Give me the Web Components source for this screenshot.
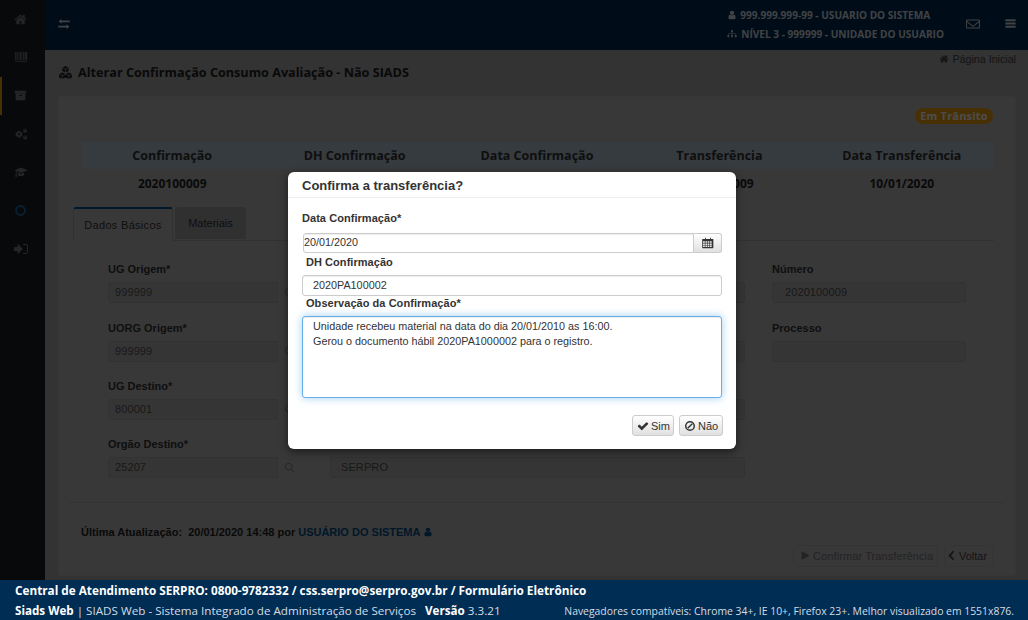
<!DOCTYPE html>
<html lang="pt-BR">
<head>
<meta charset="utf-8">
<title>SIADS</title>
<style>
  html, body { margin: 0; height: 100%; overflow: hidden; background: #b0b0b0; }
</style>
</head>
<body>

<siads-app>
  <siads-sidebar slot="sidebar"></siads-sidebar>
  <siads-topbar slot="topbar"></siads-topbar>
  <siads-page slot="page"></siads-page>
  <siads-footer slot="footer"></siads-footer>
  <siads-modal slot="modal"></siads-modal>
</siads-app>

<script>
// Icons, all on a 1792 grid
const ICONS = {
  home: '<path d="M1472 992v480q0 26-19 45t-45 19h-384v-384h-256v384h-384q-26 0-45-19t-19-45v-480q0-1 .5-3t.5-3l575-474 575 474q1 2 1 6zm223-69l-62 74q-8 9-21 11h-3q-13 0-21-7l-692-577-692 577q-12 8-24 7-13-2-21-11l-62-74q-8-10-7-23.500t11-21.500l719-599q32-26 76-26t76 26l244 204v-195q0-14 9-23t23-9h192q14 0 23 9t9 23v408l219 182q10 8 11 21.500t-7 23.500z"/>',
  user: '<path d="M1536 1399q0 109-62.500 187t-150.500 78h-854q-88 0-150.500-78t-62.500-187q0-85 8.500-160.500t31.500-152 58.500-131 94-89 134.500-34.500q131 128 313 128t313-128q76 0 134.500 34.500t94 89 58.500 131 31.500 152 8.500 160.500zm-256-887q0 159-112.500 271.500t-271.500 112.500-271.500-112.500-112.500-271.500 112.500-271.500 271.500-112.500 271.500 112.500 112.500 271.500z"/>',
  exchange: '<path d="M160 1130h1060v-190l372 300-372 300v-190H160zM1632 662H572v190L200 552l372-300v190h1060z"/>',
  barcode: '<path d="M120 260h110v1060H120zM300 260h60v1060h-60zM430 260h110v1060H430zM620 260h60v1060h-60zM760 260h130v1060H760zM970 260h60v1060h-60zM1110 260h130v1060h-130zM1320 260h60v1060h-60zM1450 260h220v1060h-220zM120 1420h1550v90H120z"/>',
  archive: '<path d="M128 256h1536v384H128zM224 704h1344v832H224z M704 832v128h384V832z" fill-rule="evenodd"/>',
  cogs: '<path fill-rule="evenodd" d="M660 480l90 20 40 150 110 60 140-50 70 120-110 100v120l110 100-70 120-140-50-110 60-40 150H530l-40-150-110-60-140 50-70-120 110-100V860l-110-100 70-120 140 50 110-60 40-150zM640 780a140 140 0 1 0 .1 0zM1380 180l80 30 20 90 60 40 90-20 40 80-70 60v70l70 60-40 80-90-20-60 40-20 90h-100l-20-90-60-40-90 20-40-80 70-60v-70l-70-60 40-80 90 20 60-40 20-90zM1360 370a75 75 0 1 0 .1 0zM1380 1040l80 30 20 90 60 40 90-20 40 80-70 60v70l70 60-40 80-90-20-60 40-20 90h-100l-20-90-60-40-90 20-40-80 70-60v-70l-70-60 40-80 90 20 60-40 20-90zM1360 1230a75 75 0 1 0 .1 0z"/>',
  graduation: '<path d="M900 330L1780 660 900 1000 380 800c-50 70-70 170-70 280 40 30 50 90 20 130l60 300H150l60-310c-30-50-20-100 20-130 0-130 30-240 80-320L20 660zM500 960l400 150 400-150v280c0 100-180 180-400 180s-400-80-400-180z"/>',
  circle: '<circle cx="896" cy="896" r="620" fill="none" stroke="currentColor" stroke-width="250"/>',
  signin: '<path d="M1120 896q0 26-19 45l-544 544q-19 19-45 19t-45-19-19-45v-288H64q-26 0-45-19t-19-45V704q0-26 19-45t45-19h384V352q0-26 19-45t45-19 45 19l544 544q19 19 19 45zM1792 544v704q0 119-84.500 203.500T1504 1536h-320q-13 0-22.500-9.500T1152 1504q0-4-1-20t-.5-26.500 3-23.500 10-19.500 20.500-6.500h320q66 0 113-47t47-113V544q0-66-47-113t-113-47h-312q-8 0-14-6t-8-16q0-4-1-20t-.5-26.500 3-23.500 10-19.500 20.500-6.500h320q119 0 203.500 84.500T1792 544z"/>',
  sitemap: '<path d="M736 192h320v384H952v208h560q40 0 68 28t28 68v208h120v384h-320v-384h120V912H952v176h104v384H736v-384h104V912H284v176h120v384H84v-384h120V880q0-40 28-68t68-28h540V576H736z"/>',
  envelope: '<path fill-rule="evenodd" d="M160 320h1472q66 0 113 47t47 113v832q0 66-47 113t-113 47H160q-66 0-113-47T0 1312V480q0-66 47-113t113-47zM128 480v30l768 610 768-610v-30q0-32-32-32H160q-32 0-32 32zm0 192v640q0 32 32 32h1472q32 0 32-32V672L936 1260q-40 28-80 0z"/>',
  bars: '<path d="M192 320h1408v256H192zM192 768h1408v256H192zM192 1216h1408v256H192z"/>',
  cubes: '<path d="M896 128l384 190v400l-384 190-384-190V318zM512 890l384 190v400l-384 190-384-190v-400zM1280 890l384 190v400l-384 190-384-190v-400z"/><path fill="none" stroke="#c4c4c4" stroke-width="70" d="M512 318l384 190 384-190M896 508v400M128 1080l384 190 384-190M512 1270v400M896 1080l384 190 384-190M1280 1270v400"/>',
  calendar: '<path fill-rule="evenodd" d="M448 128h128v160h640V128h128v160h256q40 0 68 28t28 68v1184q0 40-28 68t-68 28H128q-40 0-68-28t-28-68V384q0-40 28-68t68-28h320zM160 640v224h260V640zm356 0v224h240V640zm336 0v224h240V640zm336 0v224h260V640zM160 960v224h260V960zm356 0v224h240V960zm336 0v224h240V960zm336 0v224h260V960zM160 1280v224h260v-224zm356 0v224h240v-224zm336 0v224h240v-224zm336 0v224h260v-224z"/>',
  check: '<path d="M1671 566q0 40-28 68l-724 724-136 136q-28 28-68 28t-68-28l-136-136-362-362q-28-28-28-68t28-68l136-136q28-28 68-28t68 28l294 295 656-657q28-28 68-28t68 28l136 136q28 28 28 68z"/>',
  ban: '<circle cx="896" cy="896" r="640" fill="none" stroke="currentColor" stroke-width="220"/><path d="M470 1170L1170 470l150 150-700 700z"/>',
  play: '<path d="M256 192l1344 704-1344 704z"/>',
  chevron: '<path d="M1171 301l-531 595 531 595-199 199-750-794 750-794z"/>',
  search: '<path fill-rule="evenodd" d="M768 128a640 640 0 0 1 512 1024l400 400-128 128-400-400A640 640 0 1 1 768 128zm0 192a448 448 0 1 0 .1 0z"/>'
};

class SiadsIcon extends HTMLElement {
  connectedCallback() {
    const size = this.getAttribute( 'size' ) || '12';
    this.attachShadow( {mode: 'open'} );
    this.shadowRoot.innerHTML = /* template */ `
      <style>
        :host { display: inline-flex; flex: none; line-height: 0; }
        svg { display: block; fill: currentColor; height: ${size}px; width: ${size}px; }
      </style>
      <svg viewBox="0 0 1792 1792" aria-hidden="true">${ICONS[this.getAttribute( 'name' )] || ''}</svg>
    `;
  }
}
customElements.define( 'siads-icon', SiadsIcon );

class SiadsApp extends HTMLElement {
  constructor() {
    super();
    this.attachShadow( {mode: 'open'} );
    this.shadowRoot.innerHTML = /* template */ `
      <style>
        :host {
          display: grid;
          grid-template-columns: 45px minmax( 0, 1fr );
          grid-template-rows: 50px 530px 40px;
          height: 620px;
          overflow: hidden;
          position: relative;
          width: 1028px;
        }
        ::slotted([slot=sidebar]) { grid-column: 1; grid-row: 1 / 3; }
        ::slotted([slot=topbar]) { grid-column: 2; grid-row: 1; }
        ::slotted([slot=page]) { grid-column: 2; grid-row: 2; }
        ::slotted([slot=footer]) { grid-column: 1 / 3; grid-row: 3; position: relative; z-index: 3; }
        .scrim {
          background: rgba( 0, 0, 0, .7 );
          inset: 0;
          position: absolute;
          z-index: 2;
        }
      </style>
      <slot name="sidebar"></slot>
      <slot name="topbar"></slot>
      <slot name="page"></slot>
      <slot name="footer"></slot>
      <div class="scrim"></div>
      <slot name="modal"></slot>
    `;
  }
}
customElements.define( 'siads-app', SiadsApp );

class SiadsSidebar extends HTMLElement {
  constructor() {
    super();
    this.attachShadow( {mode: 'open'} );
    this.shadowRoot.innerHTML = /* template */ `
      <style>
        :host { background: #1c1f25; color: #7c7e83; display: block; }
        a {
          align-items: center;
          box-sizing: border-box;
          display: flex;
          height: 38.330px;
          justify-content: center;
          padding-right: 4px;
        }
        a.active { border-left: 2px solid #f0a012; padding-right: 6px; }
        .blue { color: #1a6fae; }
      </style>
      <a><siads-icon name="home" size="13"></siads-icon></a>
      <a><siads-icon name="barcode" size="14"></siads-icon></a>
      <a class="active"><siads-icon name="archive" size="13"></siads-icon></a>
      <a><siads-icon name="cogs" size="14"></siads-icon></a>
      <a><siads-icon name="graduation" size="14"></siads-icon></a>
      <a class="blue"><siads-icon name="circle" size="13"></siads-icon></a>
      <a><siads-icon name="signin" size="14"></siads-icon></a>
    `;
  }
}
customElements.define( 'siads-sidebar', SiadsSidebar );

class SiadsTopbar extends HTMLElement {
  constructor() {
    super();
    this.attachShadow( {mode: 'open'} );
    this.shadowRoot.innerHTML = /* template */ `
      <style>
        :host {
          align-items: center;
          background: #002d54;
          color: #d8dce0;
          display: flex;
          font-family: 'Open Sans', sans-serif;
          padding: 0 11px 0 12px;
        }
        .toggle { margin: -3px auto 0 0; }
        .who {
          display: flex;
          flex-direction: column;
          font-size: 10.100px;
          font-weight: 700;
          gap: 4px;
          line-height: 15px;
          margin-top: -1px;
        }
        .who div { align-items: center; display: flex; gap: 3px; white-space: nowrap; }
        .who div + div { gap: 4px; }
        .mail { margin: -2px 0 0 22px; }
        .bars { margin: -3px 0 0 24px; }
      </style>
      <siads-icon class="toggle" name="exchange" size="14"></siads-icon>
      <div class="who">
        <div><siads-icon name="user" size="10"></siads-icon>999.999.999-99 - USUARIO DO SISTEMA</div>
        <div><siads-icon name="sitemap" size="10"></siads-icon>NÍVEL 3 - 999999 - UNIDADE DO USUARIO</div>
      </div>
      <siads-icon class="mail" name="envelope" size="14"></siads-icon>
      <siads-icon class="bars" name="bars" size="13"></siads-icon>
    `;
  }
}
customElements.define( 'siads-topbar', SiadsTopbar );

class SiadsField extends HTMLElement {
  constructor() {
    super();
    this.attachShadow( {mode: 'open'} );
    this.shadowRoot.innerHTML = /* template */ `
      <style>
        :host { display: block; min-width: 0; }
        label {
          color: #333;
          display: block;
          font-weight: bold;
          height: 20px;
          line-height: 14px;
        }
        .row { display: flex; }
        .box {
          background: #b2b2b2;
          border: 1px solid #a8a8a8;
          border-radius: 3px;
          box-sizing: border-box;
          color: #555;
          flex: 1;
          height: 21px;
          letter-spacing: .1px;
          line-height: 19px;
          min-width: 0;
          padding: 0 6px 0 var( --pad, 6px );
        }
        .addon {
          align-items: center;
          color: #8a8a8a;
          display: none;
          justify-content: center;
          width: 22px;
        }
        :host([search]) .addon { display: flex; }
        :host([search]) .box { border-radius: 3px 0 0 3px; }
      </style>
      <label></label>
      <div class="row">
        <div class="box"><slot></slot></div>
        <div class="addon"><siads-icon name="search" size="11"></siads-icon></div>
      </div>
    `;
    this.shadowRoot.querySelector( 'label' ).textContent = this.getAttribute( 'label' ) || '';
  }
}
customElements.define( 'siads-field', SiadsField );

class SiadsPage extends HTMLElement {
  constructor() {
    super();
    this.attachShadow( {mode: 'open'} );
    this.shadowRoot.innerHTML = /* template */ `
      <style>
        :host {
          background: #aaa;
          box-sizing: border-box;
          color: #333;
          display: flex;
          flex-direction: column;
          font-family: 'Liberation Sans', sans-serif;
          font-size: 11px;
          padding: 0 12px 4px 13px;
        }
        .head { display: flex; flex: none; height: 46px; justify-content: space-between; }
        h1 {
          align-items: center;
          color: #222;
          display: flex;
          font-family: 'Open Sans', sans-serif;
          font-size: 12.650px;
          font-weight: 700;
          gap: 5px;
          height: 44px;
          margin: 0;
        }
        .crumb { align-items: center; color: #444; display: flex; font-size: 10.700px; gap: 3px; height: 18px; }
        .card {
          background: #bdbdbd;
          border: 1px solid #b4b4b4;
          border-radius: 3px;
          box-sizing: border-box;
          flex: 1;
          padding: 11px 22px 0;
        }
        .status { display: flex; justify-content: flex-end; height: 34px; }
        .badge {
          background: #f0a012;
          border-radius: 8px;
          box-sizing: border-box;
          color: #fff;
          font-family: 'Open Sans', sans-serif;
          font-size: 11px;
          font-weight: 700;
          height: 16px;
          letter-spacing: .2px;
          line-height: 16px;
          text-align: center;
          width: 78px;
        }
        .summary {
          display: grid;
          font-family: 'Open Sans', sans-serif;
          font-size: 12px;
          font-weight: 700;
          grid-template-columns: repeat( 5, 1fr );
          text-align: center;
        }
        .summary b { background: #b6c6d3; display: block; font-size: 12.500px; font-weight: 700; line-height: 27px; }
        .summary span { color: #222; line-height: 30px; min-height: 30px; }
        .tabs {
          border-bottom: 1px solid #a4a4a4;
          display: flex;
          gap: 2px;
          height: 33px;
          margin: 8px -1px 0 -8px;
        }
        .tab {
          border-radius: 3px 3px 0 0;
          box-sizing: border-box;
          font-size: 11px;
          text-align: center;
        }
        .tab.on {
          background: #bdbdbd;
          border: 1px solid #a4a4a4;
          border-bottom: 0;
          border-top: 2px solid #00508c;
          height: 34px;
          letter-spacing: .3px;
          line-height: 33px;
          width: 100px;
        }
        .tab.off { background: #a2a2a2; height: 32px; line-height: 32px; width: 71px; }
        .form {
          display: grid;
          grid-template-columns: 192px 415px 191px;
          column-gap: 30px;
          padding: 21.400px 0 0 27px;
          row-gap: 17.330px;
        }
        .form siads-field:nth-child(3n) { margin-left: -3px; }
        hr { border: 0; border-top: 1px solid #aaa; margin: 23.600px -12px 0; }
        .updated {
          align-items: center;
          color: #222;
          display: flex;
          font-weight: bold;
          gap: 3px;
          height: 15px;
          margin-top: 22px;
        }
        .updated a { color: #004f88; }
        .actions { display: flex; gap: 6px; justify-content: flex-end; margin-top: 5px; }
        .actions button {
          align-items: center;
          background: #bbb;
          border: 1px solid #b0b0b0;
          border-radius: 3px;
          color: #444;
          display: flex;
          font: 11px 'Liberation Sans', sans-serif;
          height: 22px;
        }
        .actions .send { color: #777; gap: 2px; letter-spacing: .1px; padding: 0 0 0 6px; width: 145px; }
        .actions .back { gap: 1px; padding: 0 0 0 2px; width: 49px; }
      </style>
      <div class="head">
        <h1><siads-icon name="cubes" size="15"></siads-icon>Alterar Confirmação Consumo Avaliação - Não SIADS</h1>
        <div class="crumb"><siads-icon name="home" size="10"></siads-icon>Página Inicial</div>
      </div>
      <div class="card">
        <div class="status"><span class="badge">Em Trânsito</span></div>
        <div class="summary">
          <b>Confirmação</b><b>DH Confirmação</b><b>Data Confirmação</b><b>Transferência</b><b>Data Transferência</b>
          <span>2020100009</span><span></span><span></span><span>2020100009</span><span>10/01/2020</span>
        </div>
        <div class="tabs">
          <div class="tab on">Dados Básicos</div>
          <div class="tab off">Materiais</div>
        </div>
        <div class="form">
          <siads-field label="UG Origem*" search>999999</siads-field>
          <siads-field></siads-field>
          <siads-field label="Número" style="--pad:12px">2020100009</siads-field>
          <siads-field label="UORG Origem*" search>999999</siads-field>
          <siads-field></siads-field>
          <siads-field label="Processo"></siads-field>
          <siads-field label="UG Destino*" search>800001</siads-field>
          <siads-field></siads-field>
          <div></div>
          <siads-field label="Orgão Destino*" search>25207</siads-field>
          <siads-field style="--pad:10px">SERPRO</siads-field>
        </div>
        <hr>
        <div class="updated">Última Atualização:&nbsp; 20/01/2020 14:48 por <a>USUÁRIO DO SISTEMA</a><siads-icon name="user" size="10" style="color:#004f88"></siads-icon></div>
        <div class="actions">
          <button class="send" disabled><siads-icon name="play" size="11"></siads-icon>Confirmar Transferência</button>
          <button class="back"><siads-icon name="chevron" size="11"></siads-icon>Voltar</button>
        </div>
      </div>
    `;
  }
}
customElements.define( 'siads-page', SiadsPage );

class SiadsFooter extends HTMLElement {
  constructor() {
    super();
    this.attachShadow( {mode: 'open'} );
    this.shadowRoot.innerHTML = /* template */ `
      <style>
        :host {
          background: #002d54;
          box-sizing: border-box;
          color: #fff;
          display: block;
          font-family: 'Open Sans', sans-serif;
          font-size: 11.750px;
          padding: 0 14px 0 15px;
        }
        .top { font-weight: 700; height: 21px; line-height: 21px; }
        .bottom { align-items: center; display: flex; height: 19px; justify-content: space-between; }
        .bottom span { color: #d5dde4; font-size: 11.650px; }
        .bottom b { color: #fff; font-weight: 700; }
        .bottom small { color: #d5dde4; font-size: 10.400px; }
      </style>
      <div class="top">Central de Atendimento SERPRO: 0800-9782332 / css.serpro@serpro.gov.br / Formulário Eletrônico</div>
      <div class="bottom">
        <span><b>Siads Web</b> | SIADS Web - Sistema Integrado de Administração de Serviços &nbsp; <b>Versão</b> 3.3.21</span>
        <small>Navegadores compatíveis: Chrome 34+, IE 10+, Firefox 23+. Melhor visualizado em 1551x876.</small>
      </div>
    `;
  }
}
customElements.define( 'siads-footer', SiadsFooter );

class SiadsModal extends HTMLElement {
  constructor() {
    super();
    this.attachShadow( {mode: 'open'} );
    this.shadowRoot.innerHTML = /* template */ `
      <style>
        :host {
          background: #fff;
          border-radius: 6px;
          box-shadow: 0 3px 9px rgba( 0, 0, 0, .5 );
          color: #333;
          font-family: 'Liberation Sans', sans-serif;
          font-size: 10.800px;
          height: 277px;
          left: 288px;
          position: absolute;
          top: 172px;
          width: 448px;
          z-index: 4;
        }
        header {
          border-bottom: 1px solid #eee;
          box-sizing: border-box;
          font-size: 13px;
          font-weight: bold;
          height: 26px;
          line-height: 28px;
          padding-left: 14px;
        }
        .body { display: flex; flex-direction: column; padding: 13px 14px 0; }
        label { display: block; font-size: 11px; font-weight: bold; letter-spacing: .05px; line-height: 14px; }
        label.in { padding-left: 4px; }
        .input {
          background: #fff;
          border: 1px solid #ccc;
          border-radius: 3px;
          box-shadow: inset 0 1px 1px rgba( 0, 0, 0, .075 );
          box-sizing: border-box;
          color: #333;
          line-height: 19px;
        }
        .date { display: flex; margin: 8px 0 0 1px; }
        .date .input { border-radius: 3px 0 0 3px; flex: 1; height: 20px; line-height: 17px; padding-left: 0; }
        .cal {
          align-items: center;
          background: linear-gradient( #fff, #e0e0e0 );
          border: 1px solid #ccc;
          border-left: 0;
          border-radius: 0 3px 3px 0;
          box-sizing: border-box;
          display: flex;
          justify-content: center;
          width: 28px;
        }
        .dh { height: 21px; margin-top: 6px; padding-left: 10px; }
        .obs {
          border-color: #66afe9;
          box-shadow: inset 0 1px 1px rgba( 0, 0, 0, .075 ), 0 0 8px rgba( 102, 175, 233, .6 );
          height: 82px;
          line-height: 15px;
          margin-top: 6px;
          padding: 2px 10px;
        }
        footer { display: flex; gap: 5px; justify-content: flex-end; margin-top: 17px; margin-right: -1px; }
        button {
          align-items: center;
          background: linear-gradient( #fff, #e0e0e0 );
          border: 1px solid #ccc;
          border-radius: 3px;
          color: #333;
          display: flex;
          font: 11px 'Liberation Sans', sans-serif;
          gap: 2px;
          height: 21px;
          padding: 0 3px 0 4px;
        }
        .sim { width: 42px; }
        .nao { width: 44px; }
      </style>
      <header>Confirma a transferência?</header>
      <div class="body">
        <label>Data Confirmação*</label>
        <div class="date">
          <div class="input">20/01/2020</div>
          <div class="cal"><siads-icon name="calendar" size="12"></siads-icon></div>
        </div>
        <label class="in" style="margin-top:2px">DH Confirmação</label>
        <div class="input dh">2020PA100002</div>
        <label class="in">Observação da Confirmação*</label>
        <div class="input obs">Unidade recebeu material na data do dia 20/01/2010 as 16:00.<br>Gerou o documento hábil 2020PA1000002 para o registro.</div>
        <footer>
          <button class="sim"><siads-icon name="check" size="12"></siads-icon>Sim</button>
          <button class="nao"><siads-icon name="ban" size="12"></siads-icon>Não</button>
        </footer>
      </div>
    `;
  }
}
customElements.define( 'siads-modal', SiadsModal );
</script>
</body>
</html>
